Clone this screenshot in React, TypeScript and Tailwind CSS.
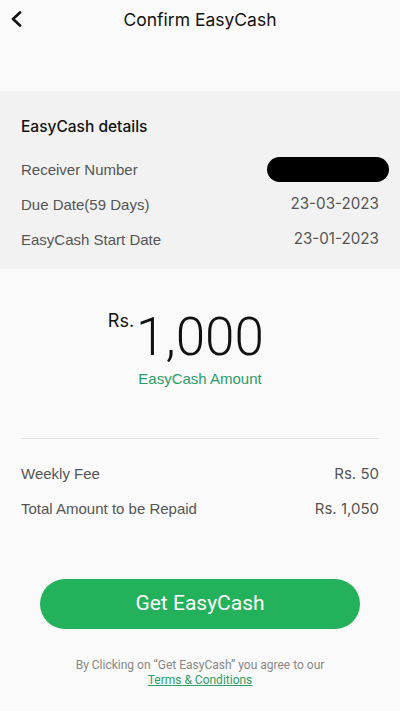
import React from "react";

function Row({ label, value, valueClass = "text-[15px]" }: { label: string; value: React.ReactNode; valueClass?: string }) {
  return (
    <div className="flex h-[35px] items-center justify-between text-[#555555]">
      <span className="text-[15px]" style={{ fontFamily: "'Liberation Sans', Arial, sans-serif" }}>
        {label}
      </span>
      <span className={valueClass}>{value}</span>
    </div>
  );
}

export default function App() {
  return (
    <div
      className="flex h-[711px] w-[400px] flex-col bg-[#fafafa]"
      style={{ fontFamily: "Inter, 'Noto Sans', sans-serif" }}
    >
      <div className="relative flex h-[40px] items-center justify-center">
        <svg
          className="absolute left-[9px] top-[11px]"
          width="14"
          height="16"
          viewBox="0 0 14 16"
          fill="none"
        >
          <path d="M11 1.5L4 8l7 6.5" stroke="#111" strokeWidth="2.6" strokeLinecap="round" strokeLinejoin="round" />
        </svg>
        <span className="text-[17.5px] text-[#111]">Confirm EasyCash</span>
      </div>
      <div className="h-[51px]" />
      <div className="bg-[#f2f2f2] px-[21px] pt-[24px] pb-[12px]">
        <div className="mb-[14px] text-[15.5px] font-medium text-[#111]">EasyCash details</div>
        <Row
          label="Receiver Number"
          value={<span className="mr-[-10px] block h-[25px] w-[122px] rounded-full bg-black" />}
        />
        <Row label="Due Date(59 Days)" value="23-03-2023" valueClass="text-[15.2px]" />
        <Row label="EasyCash Start Date" value="23-01-2023" valueClass="text-[15.2px]" />
      </div>
      <div className="flex flex-col items-center pt-[38px]">
        <div className="relative mt-[2px]">
          <span className="absolute right-full top-[0px] mr-[2px] text-[18px] leading-[24px] text-[#111]">Rs.</span>
          <span
            className="block text-[53px] font-light leading-[56px] text-[#111]"
            style={{ fontFamily: "Roboto, sans-serif" }}
          >
            1,000
          </span>
        </div>
        <div
          className="mt-[3px] text-[15px] text-[#2a9d68]"
          style={{ fontFamily: "'Liberation Sans', Arial, sans-serif" }}
        >
          EasyCash Amount
        </div>
      </div>
      <div className="mx-[21px] mt-[47px] h-px bg-[#e2e2e2]" />
      <div className="px-[21px] pt-[18px]">
        <Row label="Weekly Fee" value="Rs. 50" />
        <Row label="Total Amount to be Repaid" value="Rs. 1,050" />
      </div>
      <div className="mt-[52px] px-[40px]">
        <button
          className="flex h-[50px] w-full items-center justify-center rounded-full bg-[#23b15b] text-[21px] text-white"
          style={{ fontFamily: "Roboto, sans-serif" }}
        >
          Get EasyCash
        </button>
      </div>
      <div
        className="mt-[29px] text-center text-[12px] leading-[15px] text-[#888888]"
        style={{ fontFamily: "Roboto, sans-serif" }}
      >
        <div>By Clicking on “Get EasyCash” you agree to our</div>
        <div className="text-[#2a9d68] underline">Terms &amp; Conditions</div>
      </div>
    </div>
  );
}
